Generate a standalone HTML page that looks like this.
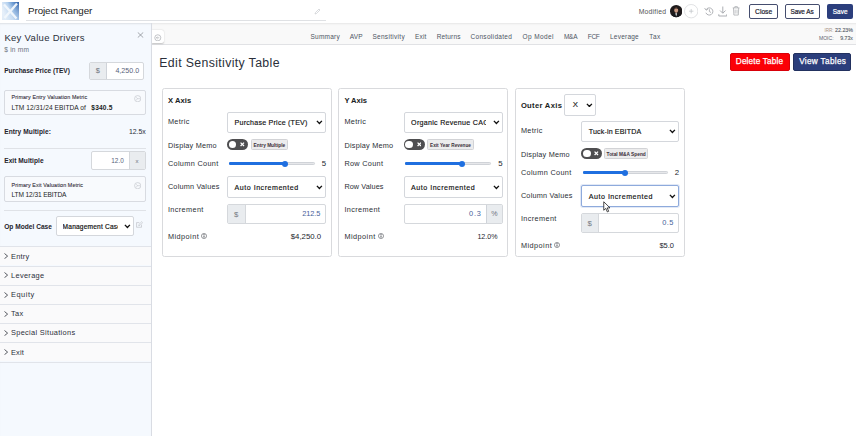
<!DOCTYPE html>
<html><head><meta charset='utf-8'><title>Edit Sensitivity Table</title>
<style>
html,body{margin:0;padding:0;background:#fff;}
body{width:856px;height:436px;overflow:hidden;position:relative;font-family:"Liberation Sans",sans-serif;}
#r{position:absolute;left:0;top:0;width:856px;height:436px;overflow:hidden;}
#r div,#r svg,#r span{position:absolute;box-sizing:border-box;}
#r span{white-space:pre;line-height:1;}
</style></head>
<body><div id='r'>
<header>
<div style='left:0.00px;top:0.00px;width:856.00px;height:23.40px;background:#fff;'></div>
<svg style='left:2px;top:2px' width='17' height='18' viewBox='0 0 34 36'>
<defs><linearGradient id='lg' x1='0' y1='.35' x2='1' y2='0'><stop offset='0' stop-color='#e4eef9'/><stop offset='.38' stop-color='#b4d0ee'/><stop offset='.62' stop-color='#6f9fd6'/><stop offset='1' stop-color='#2c5da6'/></linearGradient>
<linearGradient id='lg2' x1='0' y1='0' x2='0' y2='1'><stop offset='0' stop-color='#fff' stop-opacity='0'/><stop offset='1' stop-color='#dbe9f7' stop-opacity='.55'/></linearGradient></defs>
<rect width='34' height='36' fill='url(#lg)'/><rect width='34' height='36' fill='url(#lg2)'/>
<path d='M4 5 L29 33 M30 3 L5 32' stroke='#f3f8fd' stroke-width='4.6' opacity='.95'/>
</svg>
<span style='left:28.00px;top:6px;font-size:9.8px;font-weight:400;color:#222;letter-spacing:-0.082px'>Project Ranger</span>
<div style='left:26.00px;top:20.00px;width:300.00px;height:0.80px;background:#dfe1e4;'></div>
<svg style='left:313.5px;top:7.5px' width='7' height='7' viewBox='0 0 14 14'><path d='M2 12 L3 9 L10 2 L12 4 L5 11 Z' fill='none' stroke='#c9ccd0' stroke-width='1.4'/></svg>
<span style='left:638.70px;top:9px;font-size:6.8px;font-weight:400;color:#555;letter-spacing:0.228px'>Modified</span>
<svg style='left:669.8px;top:5.2px' width='12.4' height='12.4' viewBox='0 0 24 24'><defs><clipPath id='av'><circle cx='12' cy='12' r='12'/></clipPath></defs><g clip-path='url(#av)'><rect width='24' height='24' fill='#1f1b1c'/><ellipse cx='12' cy='10.2' rx='3.7' ry='5.4' fill='#c99a82'/><path d='M8.2 8.6 C8 3.6 16 3.6 15.8 8.6 C14.5 6.2 9.5 6.2 8.2 8.6Z' fill='#2a1c17'/><path d='M1 24 C2.5 17.5 8 16.6 12 16.6 C16 16.6 21.5 17.5 23 24 Z' fill='#17181c'/><path d='M10.2 16.2 L12 22.5 L13.8 16.2 Z' fill='#f0f2f5'/></g></svg>
<svg style='left:683.8px;top:4.2px' width='14.4' height='14.4' viewBox='0 0 28.8 28.8'><circle cx='14.4' cy='14.4' r='13.4' fill='#fff' stroke='#d0d2d5' stroke-width='1.3'/><path d='M14.4 10 V18.8 M10 14.4 H18.8' stroke='#c0c2c6' stroke-width='1.5'/></svg>
<svg style='left:703.5px;top:6.2px' width='10.5' height='10.5' viewBox='0 0 21 21'><path d='M4.2 7.5 A7.2 7.2 0 1 1 3.8 13.5' fill='none' stroke='#a3a5aa' stroke-width='1.7'/><path d='M1.2 4.2 L4.4 8.4 L8.4 5.6' fill='none' stroke='#a3a5aa' stroke-width='1.7'/><path d='M10.8 6.4 V11.2 L14 13' fill='none' stroke='#a3a5aa' stroke-width='1.6'/></svg>
<svg style='left:717.6px;top:5.8px' width='9.6' height='11' viewBox='0 0 19 22'><path d='M9.5 1 V14 M4 9 L9.5 14.5 L15 9' fill='none' stroke='#a3a5aa' stroke-width='1.8'/><path d='M1.5 16.5 V20 H17.5 V16.5' fill='none' stroke='#a3a5aa' stroke-width='1.8'/></svg>
<svg style='left:732.4px;top:5.9px' width='8.2' height='9.7' viewBox='0 0 18 23'><path d='M1 4.5 H17 M6 4.5 V1.5 H12 V4.5' fill='none' stroke='#a3a5aa' stroke-width='1.7'/><path d='M2.8 4.5 L3.8 21.5 H14.2 L15.2 4.5' fill='none' stroke='#a3a5aa' stroke-width='1.7'/><path d='M6.8 8.5 V18 M11.2 8.5 V18' stroke='#a3a5aa' stroke-width='1.5'/></svg>
<div style='left:749.30px;top:4.30px;width:28.40px;height:14.40px;background:#fff;border:0.8px solid #454d6e;border-radius:2px;'></div>
<span style='left:755.10px;top:9px;font-size:6.7px;font-weight:400;color:#1f2533;letter-spacing:-0.008px;-webkit-text-stroke:0.22px #1f2533'>Close</span>
<div style='left:784.60px;top:4.30px;width:35.00px;height:14.40px;background:#fff;border:0.8px solid #454d6e;border-radius:2px;'></div>
<span style='left:790.40px;top:9px;font-size:6.4px;font-weight:400;color:#1f2533;letter-spacing:-0.014px;-webkit-text-stroke:0.22px #1f2533'>Save As</span>
<div style='left:826.80px;top:4.30px;width:26.50px;height:14.40px;background:#2b3e7c;border-radius:2px;'></div>
<span style='left:832.80px;top:9px;font-size:6.4px;font-weight:400;color:#fff;letter-spacing:0.037px;-webkit-text-stroke:0.22px #fff'>Save</span>
</header>
<nav>
<div style='left:152.00px;top:23.00px;width:704.00px;height:21.80px;background:#f9f9f9;border-bottom:0.8px solid #e1e2e5;box-shadow:inset 0 2px 2px -1px rgba(0,0,0,.08);'></div>
<span style='left:310.50px;top:34px;font-size:6.5px;font-weight:400;color:#4d5563;letter-spacing:0.232px'>Summary</span>
<span style='left:349.80px;top:34px;font-size:6.5px;font-weight:400;color:#4d5563;letter-spacing:0.138px'>AVP</span>
<span style='left:372.40px;top:34px;font-size:6.5px;font-weight:400;color:#4d5563;letter-spacing:0.304px'>Sensitivity</span>
<span style='left:415.00px;top:34px;font-size:6.5px;font-weight:400;color:#4d5563;letter-spacing:0.188px'>Exit</span>
<span style='left:436.70px;top:34px;font-size:6.5px;font-weight:400;color:#4d5563;letter-spacing:0.173px'>Returns</span>
<span style='left:470.50px;top:34px;font-size:6.5px;font-weight:400;color:#4d5563;letter-spacing:0.314px'>Consolidated</span>
<span style='left:522.60px;top:34px;font-size:6.5px;font-weight:400;color:#4d5563;letter-spacing:0.388px'>Op Model</span>
<span style='left:564.00px;top:34px;font-size:6.5px;font-weight:400;color:#4d5563;letter-spacing:-0.293px'>M&amp;A</span>
<span style='left:587.80px;top:34px;font-size:6.5px;font-weight:400;color:#4d5563;letter-spacing:-0.368px'>FCF</span>
<span style='left:610.00px;top:34px;font-size:6.5px;font-weight:400;color:#4d5563;letter-spacing:0.228px'>Leverage</span>
<span style='left:649.30px;top:34px;font-size:6.5px;font-weight:400;color:#4d5563;letter-spacing:0.442px'>Tax</span>
<span style='left:824.40px;top:29px;font-size:4.5px;font-weight:400;color:#a8937f;letter-spacing:0.000px'>IRR:</span>
<span style='left:835.00px;top:28px;font-size:5.3px;font-weight:400;color:#555b66;letter-spacing:0.005px;-webkit-text-stroke:0.1px #555b66'>22.23%</span>
<span style='left:818.90px;top:36px;font-size:5.1px;font-weight:400;color:#5f646d;letter-spacing:-0.008px'>MOIC:</span>
<span style='left:840.30px;top:36px;font-size:5.2px;font-weight:400;color:#555b66;letter-spacing:-0.005px;-webkit-text-stroke:0.1px #555b66'>9.73x</span>
<div style='left:152.00px;top:30.00px;width:12.00px;height:13.40px;background:#fff;border-radius:0 2.5px 2.5px 0;box-shadow:0 0.5px 1.5px rgba(0,0,0,.22);'></div>
<svg style='left:154.2px;top:33.5px' width='7.6' height='7.6' viewBox='0 0 16 16'><circle cx='8' cy='8' r='6.4' fill='none' stroke='#a4a7ad' stroke-width='1.4'/><path d='M11.2 8 H5.4 M7.6 5.4 L5 8 L7.6 10.6' fill='none' stroke='#a4a7ad' stroke-width='1.4'/></svg>
</nav>
<aside>
<div style='left:0.00px;top:23.00px;width:151.00px;height:413.00px;background:#f5f9fe;box-shadow:inset 0 2px 2px -1px rgba(0,0,0,.10);'></div>
<span style='left:4.40px;top:33px;font-size:9.5px;font-weight:400;color:#2a2f3a;letter-spacing:0.305px'>Key Value Drivers</span>
<svg style='left:136.8px;top:32.4px' width='7' height='6' viewBox='0 0 14 12'><path d='M1.5 0.8 L12.5 11.2 M12.5 0.8 L1.5 11.2' stroke='#777b82' stroke-width='1.3'/></svg>
<span style='left:4.20px;top:47px;font-size:6.6px;font-weight:400;color:#6c727c;letter-spacing:0.221px'>$ in mm</span>
<span style='left:4.20px;top:68px;font-size:6.6px;font-weight:700;color:#1f232b;letter-spacing:-0.051px'>Purchase Price (TEV)</span>
<div style='left:89.20px;top:62.00px;width:54.60px;height:18.00px;background:#fff;border:0.8px solid #d5d8dc;border-radius:2px;overflow:hidden;'><div style='left:0.00px;top:0.00px;width:17.00px;height:17.20px;background:#e9ecef;border-right:0.8px solid #cfd3d9;'></div></div>
<span style='left:95.70px;top:67px;font-size:7.4px;font-weight:400;color:#6c727c;letter-spacing:0.000px'>$</span>
<span style='left:115.40px;top:68px;font-size:7.1px;font-weight:400;color:#56627a;letter-spacing:0.018px'>4,250.0</span>
<div style='left:4.10px;top:90.20px;width:141.70px;height:25.20px;background:#f8fafd;border:0.8px solid #d8dbe1;border-radius:2px;'></div>
<span style='left:11.50px;top:95px;font-size:5.3px;font-weight:400;color:#332e3a;letter-spacing:0.153px;-webkit-text-stroke:0.1px #332e3a'>Primary Entry Valuation Metric</span>
<span style='left:11.50px;top:105px;font-size:6.6px;font-weight:400;color:#1c1f25;letter-spacing:0.077px'>LTM 12/31/24 EBITDA of</span>
<span style='left:91.30px;top:105px;font-size:6.6px;font-weight:700;color:#1c1f25;letter-spacing:0.183px'>$340.5</span>
<svg style='left:133.70px;top:94.70px' width='7.4' height='7.4' viewBox='0 0 14 14'><circle cx='7' cy='7' r='5.9' fill='none' stroke='#c0c3c9' stroke-width='1.2'/><path d='M4 4.6 L7.2 7 L4 9.6 M7.2 7 H12' fill='none' stroke='#c0c3c9' stroke-width='1.1'/></svg>
<span style='left:4.20px;top:129px;font-size:6.6px;font-weight:700;color:#1f232b;letter-spacing:0.062px'>Entry Multiple:</span>
<span style='left:129.00px;top:129px;font-size:6.9px;font-weight:400;color:#2a2f3a;letter-spacing:-0.020px'>12.5x</span>
<div style='left:4.10px;top:147.70px;width:141.50px;height:0.80px;background:#dfe2e7;'></div>
<span style='left:4.20px;top:158px;font-size:6.6px;font-weight:700;color:#1f232b;letter-spacing:0.044px'>Exit Multiple</span>
<div style='left:90.50px;top:151.00px;width:55.30px;height:19.00px;background:#fff;border:0.8px solid #d5d8dc;border-radius:2px;overflow:hidden;'><div style='left:37.60px;top:0.00px;width:18.40px;height:19.00px;background:#e9ecef;border-left:0.8px solid #d5d8dc;'></div></div>
<span style='left:111.30px;top:158px;font-size:6.4px;font-weight:400;color:#56627a;letter-spacing:0.014px'>12.0</span>
<span style='left:135.60px;top:158px;font-size:6.0px;font-weight:400;color:#6c727c;letter-spacing:0.000px'>x</span>
<div style='left:4.10px;top:176.20px;width:141.70px;height:26.20px;background:#f8fafd;border:0.8px solid #d8dbe1;border-radius:2px;'></div>
<span style='left:11.50px;top:183px;font-size:5.3px;font-weight:400;color:#332e3a;letter-spacing:0.138px;-webkit-text-stroke:0.1px #332e3a'>Primary Exit Valuation Metric</span>
<span style='left:11.50px;top:192px;font-size:6.6px;font-weight:400;color:#1c1f25;letter-spacing:-0.115px'>LTM 12/31 EBITDA</span>
<svg style='left:133.70px;top:181.70px' width='7.4' height='7.4' viewBox='0 0 14 14'><circle cx='7' cy='7' r='5.9' fill='none' stroke='#c0c3c9' stroke-width='1.2'/><path d='M4 4.6 L7.2 7 L4 9.6 M7.2 7 H12' fill='none' stroke='#c0c3c9' stroke-width='1.1'/></svg>
<div style='left:4.10px;top:210.00px;width:141.50px;height:0.80px;background:#dfe2e7;'></div>
<span style='left:4.20px;top:224px;font-size:6.6px;font-weight:700;color:#1f232b;letter-spacing:0.010px'>Op Model Case</span>
<div style='left:55.50px;top:216.00px;width:78.20px;height:19.80px;background:#fff;border:0.8px solid #d4d7dc;border-radius:2px;'></div>
<div style='left:62.60px;top:222px;width:55.80px;height:11.6px;overflow:hidden'><span style='left:0;top:2px;font-size:6.6px;font-weight:400;color:#111;letter-spacing:0.190px;-webkit-text-stroke:0.18px #111'>Management Case</span></div>
<svg style='left:123.90px;top:224.40px' width='6.8' height='4.6' viewBox='0 0 13.6 9.2'><path d='M1.8 1.8 L6.8 7 L11.8 1.8' fill='none' stroke='#111' stroke-width='2.7'/></svg>
<svg style='left:136.3px;top:220.8px' width='7.2' height='7' viewBox='0 0 15 14'><path d='M11.5 7.5 V12.8 H1.2 V3 H7' fill='none' stroke='#b9bcc2' stroke-width='1.3'/><path d='M5.5 9.5 L6.2 6.8 L12 1 L14 3 L8.2 8.8 Z' fill='none' stroke='#b9bcc2' stroke-width='1.2'/></svg>
<div style='left:0.00px;top:246.30px;width:151.00px;height:19.20px;background:#fafafb;border-top:0.8px solid #e1e4ea;'></div>
<svg style='left:4.1px;top:253.10px' width='4.2' height='6.2' viewBox='0 0 8.4 12.4'><path d='M1 1 L7.2 6.2 L1 11.4' fill='none' stroke='#2c3038' stroke-width='1.6'/></svg>
<span style='left:11.00px;top:253px;font-size:7.4px;font-weight:400;color:#2a2f3a;letter-spacing:0.257px'>Entry</span>
<div style='left:0.00px;top:265.50px;width:151.00px;height:19.20px;background:#fafafb;border-top:0.8px solid #e1e4ea;'></div>
<svg style='left:4.1px;top:272.30px' width='4.2' height='6.2' viewBox='0 0 8.4 12.4'><path d='M1 1 L7.2 6.2 L1 11.4' fill='none' stroke='#2c3038' stroke-width='1.6'/></svg>
<span style='left:11.00px;top:272px;font-size:7.4px;font-weight:400;color:#2a2f3a;letter-spacing:0.335px'>Leverage</span>
<div style='left:0.00px;top:284.70px;width:151.00px;height:19.20px;background:#fafafb;border-top:0.8px solid #e1e4ea;'></div>
<svg style='left:4.1px;top:291.50px' width='4.2' height='6.2' viewBox='0 0 8.4 12.4'><path d='M1 1 L7.2 6.2 L1 11.4' fill='none' stroke='#2c3038' stroke-width='1.6'/></svg>
<span style='left:11.00px;top:291px;font-size:7.4px;font-weight:400;color:#2a2f3a;letter-spacing:0.527px'>Equity</span>
<div style='left:0.00px;top:303.90px;width:151.00px;height:19.20px;background:#fafafb;border-top:0.8px solid #e1e4ea;'></div>
<svg style='left:4.1px;top:310.70px' width='4.2' height='6.2' viewBox='0 0 8.4 12.4'><path d='M1 1 L7.2 6.2 L1 11.4' fill='none' stroke='#2c3038' stroke-width='1.6'/></svg>
<span style='left:11.00px;top:310px;font-size:7.4px;font-weight:400;color:#2a2f3a;letter-spacing:0.342px'>Tax</span>
<div style='left:0.00px;top:323.10px;width:151.00px;height:19.20px;background:#fafafb;border-top:0.8px solid #e1e4ea;'></div>
<svg style='left:4.1px;top:329.90px' width='4.2' height='6.2' viewBox='0 0 8.4 12.4'><path d='M1 1 L7.2 6.2 L1 11.4' fill='none' stroke='#2c3038' stroke-width='1.6'/></svg>
<span style='left:11.00px;top:329px;font-size:7.4px;font-weight:400;color:#2a2f3a;letter-spacing:0.316px'>Special Situations</span>
<div style='left:0.00px;top:342.30px;width:151.00px;height:19.20px;background:#fafafb;border-top:0.8px solid #e1e4ea;'></div>
<svg style='left:4.1px;top:349.10px' width='4.2' height='6.2' viewBox='0 0 8.4 12.4'><path d='M1 1 L7.2 6.2 L1 11.4' fill='none' stroke='#2c3038' stroke-width='1.6'/></svg>
<span style='left:11.00px;top:349px;font-size:7.4px;font-weight:400;color:#2a2f3a;letter-spacing:0.155px'>Exit</span>
<div style='left:0.00px;top:361.50px;width:151.20px;height:0.80px;background:#e1e4ea;'></div>
<div style='left:151.00px;top:23.00px;width:1.00px;height:413.00px;background:#d9dce3;'></div>
</aside>
<main>
<span style='left:159.30px;top:57px;font-size:12.3px;font-weight:400;color:#2a2f3a;letter-spacing:0.363px'>Edit Sensitivity Table</span>
<div style='left:729.50px;top:53.20px;width:60.10px;height:17.60px;background:#fb0006;border:0.8px solid #d8000a;border-radius:2px;'></div>
<span style='left:735.80px;top:58px;font-size:8.2px;font-weight:400;color:#fff;letter-spacing:0.178px;-webkit-text-stroke:0.25px #fff'>Delete Table</span>
<div style='left:793.00px;top:53.20px;width:58.00px;height:17.60px;background:#2b3e7c;border:0.8px solid #22315f;border-radius:2px;'></div>
<span style='left:799.20px;top:58px;font-size:8.2px;font-weight:400;color:#fff;letter-spacing:0.334px;-webkit-text-stroke:0.25px #fff'>View Tables</span>
<section><div style='left:162.00px;top:88.00px;width:170.00px;height:169.00px;background:#fff;border:1px solid #d9dadd;border-radius:2.5px;'></div><span style='left:167.90px;top:97px;font-size:7.6px;font-weight:700;color:#1a1d23;letter-spacing:0.069px'>X Axis</span><span style='left:167.90px;top:118px;font-size:7.3px;font-weight:400;color:#2b2f36;letter-spacing:0.326px'>Metric</span><div style='left:227.10px;top:112.40px;width:98.80px;height:20.20px;background:#fff;border:0.8px solid #d4d7dc;border-radius:2px;'></div><span style='left:234.60px;top:120px;font-size:7.1px;font-weight:400;color:#111;letter-spacing:0.223px;-webkit-text-stroke:0.15px #111'>Purchase Price (TEV)</span><svg style='left:315.90px;top:120.30px' width='6.8' height='4.6' viewBox='0 0 13.6 9.2'><path d='M1.8 1.8 L6.8 7 L11.8 1.8' fill='none' stroke='#111' stroke-width='2.7'/></svg><span style='left:167.90px;top:142px;font-size:7.3px;font-weight:400;color:#2b2f36;letter-spacing:0.232px'>Display Memo</span><div style='left:227.20px;top:139.00px;width:21.10px;height:11.00px;background:#4e4e50;border-radius:5.50px;'><div style='left:1.7px;top:1.7px;width:7.60px;height:7.60px;border-radius:50%;background:#fff'></div><svg style='left:12.90px;top:3.20px' width='4.6' height='4.6' viewBox='0 0 8 8'><path d='M1 1 L7 7 M7 1 L1 7' stroke='#fff' stroke-width='2.2'/></svg></div><div style='left:251.10px;top:139.00px;width:36.60px;height:10.60px;background:#ececed;border:0.7px solid #d2d3d6;border-radius:1.5px;'></div><span style='left:253.60px;top:144px;font-size:4.8px;font-weight:700;color:#3a2f3a;letter-spacing:-0.010px'>Entry Multiple</span><span style='left:167.90px;top:160px;font-size:7.3px;font-weight:400;color:#2b2f36;letter-spacing:0.340px'>Column Count</span><div style='left:228.90px;top:162.20px;width:85.90px;height:2.60px;background:#e6e7ea;border:0.5px solid #d0d3d8;border-radius:1.3px;'></div><div style='left:228.90px;top:162.20px;width:56.40px;height:2.60px;background:#1f6fe0;border-radius:1.3px;'></div><div style='left:282.30px;top:160.50px;width:6.00px;height:6.00px;background:#1f6fe0;border-radius:50%;'></div><span style='left:321.80px;top:160px;font-size:7.8px;font-weight:400;color:#22262d;letter-spacing:0.000px'>5</span><span style='left:167.90px;top:183px;font-size:7.3px;font-weight:400;color:#2b2f36;letter-spacing:0.212px'>Column Values</span><div style='left:227.10px;top:176.20px;width:98.80px;height:21.40px;background:#fff;border:0.8px solid #d4d7dc;border-radius:2px;'></div><span style='left:234.60px;top:185px;font-size:7.1px;font-weight:400;color:#111;letter-spacing:0.504px;-webkit-text-stroke:0.15px #111'>Auto Incremented</span><svg style='left:315.90px;top:185.00px' width='6.8' height='4.6' viewBox='0 0 13.6 9.2'><path d='M1.8 1.8 L6.8 7 L11.8 1.8' fill='none' stroke='#111' stroke-width='2.7'/></svg><span style='left:167.90px;top:206px;font-size:7.3px;font-weight:400;color:#2b2f36;letter-spacing:0.380px'>Increment</span><div style='left:227.10px;top:204.30px;width:98.80px;height:19.30px;background:#fff;border:0.8px solid #d5d8dc;border-radius:2px;overflow:hidden;'><div style='left:0.00px;top:0.00px;width:17.60px;height:19.30px;background:#e9ecef;border-right:0.8px solid #d5d8dc;'></div></div><span style='left:234.00px;top:211px;font-size:7.8px;font-weight:400;color:#747981;letter-spacing:0.000px'>$</span><span style='left:302.20px;top:210px;font-size:7.4px;font-weight:400;color:#46629a;letter-spacing:-0.080px'>212.5</span><span style='left:167.90px;top:233px;font-size:7.3px;font-weight:400;color:#2b2f36;letter-spacing:0.458px'>Midpoint</span><svg style='left:201.30px;top:232.60px' width='6' height='6' viewBox='0 0 12 12'><circle cx='6' cy='6' r='5.1' fill='none' stroke='#33373e' stroke-width='1'/><path d='M6 5 V9.2' stroke='#33373e' stroke-width='1.7'/><circle cx='6' cy='3' r='1' fill='#33373e'/></svg><span style='left:290.80px;top:233px;font-size:7.8px;font-weight:400;color:#22262d;letter-spacing:-0.023px'>$4,250.0</span></section>
<section><div style='left:338.00px;top:88.00px;width:170.00px;height:169.00px;background:#fff;border:1px solid #d9dadd;border-radius:2.5px;'></div><span style='left:344.40px;top:97px;font-size:7.6px;font-weight:700;color:#1a1d23;letter-spacing:-0.023px'>Y Axis</span><span style='left:344.40px;top:118px;font-size:7.3px;font-weight:400;color:#2b2f36;letter-spacing:0.326px'>Metric</span><div style='left:403.60px;top:112.40px;width:99.50px;height:20.20px;background:#fff;border:0.8px solid #d4d7dc;border-radius:2px;'></div><div style='left:411.10px;top:118px;width:74.80px;height:12.1px;overflow:hidden'><span style='left:0;top:2px;font-size:7.1px;font-weight:400;color:#111;letter-spacing:0.280px;-webkit-text-stroke:0.15px #111'>Organic Revenue CAGR</span></div><svg style='left:493.10px;top:120.30px' width='6.8' height='4.6' viewBox='0 0 13.6 9.2'><path d='M1.8 1.8 L6.8 7 L11.8 1.8' fill='none' stroke='#111' stroke-width='2.7'/></svg><span style='left:344.40px;top:142px;font-size:7.3px;font-weight:400;color:#2b2f36;letter-spacing:0.232px'>Display Memo</span><div style='left:403.70px;top:139.00px;width:21.10px;height:11.00px;background:#4e4e50;border-radius:5.50px;'><div style='left:1.7px;top:1.7px;width:7.60px;height:7.60px;border-radius:50%;background:#fff'></div><svg style='left:12.90px;top:3.20px' width='4.6' height='4.6' viewBox='0 0 8 8'><path d='M1 1 L7 7 M7 1 L1 7' stroke='#fff' stroke-width='2.2'/></svg></div><div style='left:427.40px;top:139.00px;width:46.20px;height:10.60px;background:#ececed;border:0.7px solid #d2d3d6;border-radius:1.5px;'></div><span style='left:430.00px;top:144px;font-size:4.7px;font-weight:700;color:#3a2f3a;letter-spacing:0.021px'>Exit Year Revenue</span><span style='left:344.40px;top:160px;font-size:7.3px;font-weight:400;color:#2b2f36;letter-spacing:0.311px'>Row Count</span><div style='left:405.40px;top:162.20px;width:85.90px;height:2.60px;background:#e6e7ea;border:0.5px solid #d0d3d8;border-radius:1.3px;'></div><div style='left:405.40px;top:162.20px;width:56.40px;height:2.60px;background:#1f6fe0;border-radius:1.3px;'></div><div style='left:458.80px;top:160.50px;width:6.00px;height:6.00px;background:#1f6fe0;border-radius:50%;'></div><span style='left:498.30px;top:160px;font-size:7.8px;font-weight:400;color:#22262d;letter-spacing:0.000px'>5</span><span style='left:344.40px;top:183px;font-size:7.3px;font-weight:400;color:#2b2f36;letter-spacing:0.077px'>Row Values</span><div style='left:403.60px;top:176.20px;width:99.50px;height:21.40px;background:#fff;border:0.8px solid #d4d7dc;border-radius:2px;'></div><span style='left:411.10px;top:185px;font-size:7.1px;font-weight:400;color:#111;letter-spacing:0.504px;-webkit-text-stroke:0.15px #111'>Auto Incremented</span><svg style='left:493.10px;top:185.00px' width='6.8' height='4.6' viewBox='0 0 13.6 9.2'><path d='M1.8 1.8 L6.8 7 L11.8 1.8' fill='none' stroke='#111' stroke-width='2.7'/></svg><span style='left:344.40px;top:206px;font-size:7.3px;font-weight:400;color:#2b2f36;letter-spacing:0.380px'>Increment</span><div style='left:403.60px;top:204.30px;width:99.50px;height:19.30px;background:#fff;border:0.8px solid #d5d8dc;border-radius:2px;overflow:hidden;'><div style='left:81.90px;top:0.00px;width:17.60px;height:19.30px;background:#e9ecef;border-left:0.8px solid #cfd3d9;'></div></div><span style='left:491.30px;top:211px;font-size:7.1px;font-weight:400;color:#6c727c;letter-spacing:0.000px'>%</span><span style='left:469.00px;top:210px;font-size:7.4px;font-weight:400;color:#46629a;letter-spacing:0.806px'>0.3</span><span style='left:344.40px;top:233px;font-size:7.3px;font-weight:400;color:#2b2f36;letter-spacing:0.458px'>Midpoint</span><svg style='left:377.80px;top:232.60px' width='6' height='6' viewBox='0 0 12 12'><circle cx='6' cy='6' r='5.1' fill='none' stroke='#33373e' stroke-width='1'/><path d='M6 5 V9.2' stroke='#33373e' stroke-width='1.7'/><circle cx='6' cy='3' r='1' fill='#33373e'/></svg><span style='left:477.40px;top:234px;font-size:7.1px;font-weight:400;color:#22262d;letter-spacing:-0.008px'>12.0%</span></section>
<section><div style='left:515.00px;top:88.00px;width:170.00px;height:169.00px;background:#fff;border:1px solid #d9dadd;border-radius:2.5px;'></div><div style='left:564.20px;top:93.80px;width:31.60px;height:22.00px;background:#fff;border:0.8px solid #d4d7dc;border-radius:2px;'></div><span style='left:572.80px;top:101px;font-size:7.8px;font-weight:400;color:#16181c;letter-spacing:0.000px;-webkit-text-stroke:0.15px #16181c'>X</span><svg style='left:586.30px;top:102.90px' width='6.8' height='4.6' viewBox='0 0 13.6 9.2'><path d='M1.8 1.8 L6.8 7 L11.8 1.8' fill='none' stroke='#111' stroke-width='2.7'/></svg><span style='left:520.90px;top:102px;font-size:7.6px;font-weight:700;color:#1a1d23;letter-spacing:0.316px'>Outer Axis</span><span style='left:520.90px;top:127px;font-size:7.3px;font-weight:400;color:#2b2f36;letter-spacing:0.326px'>Metric</span><div style='left:581.30px;top:121.40px;width:97.60px;height:20.20px;background:#fff;border:0.8px solid #d4d7dc;border-radius:2px;'></div><span style='left:588.80px;top:129px;font-size:7.1px;font-weight:400;color:#111;letter-spacing:0.136px;-webkit-text-stroke:0.15px #111'>Tuck-in EBITDA</span><svg style='left:668.90px;top:129.30px' width='6.8' height='4.6' viewBox='0 0 13.6 9.2'><path d='M1.8 1.8 L6.8 7 L11.8 1.8' fill='none' stroke='#111' stroke-width='2.7'/></svg><span style='left:520.90px;top:151px;font-size:7.3px;font-weight:400;color:#2b2f36;letter-spacing:0.232px'>Display Memo</span><div style='left:581.40px;top:148.00px;width:21.10px;height:11.00px;background:#4e4e50;border-radius:5.50px;'><div style='left:1.7px;top:1.7px;width:7.60px;height:7.60px;border-radius:50%;background:#fff'></div><svg style='left:12.90px;top:3.20px' width='4.6' height='4.6' viewBox='0 0 8 8'><path d='M1 1 L7 7 M7 1 L1 7' stroke='#fff' stroke-width='2.2'/></svg></div><div style='left:604.10px;top:148.00px;width:44.20px;height:10.60px;background:#ececed;border:0.7px solid #d2d3d6;border-radius:1.5px;'></div><span style='left:606.60px;top:153px;font-size:4.8px;font-weight:700;color:#3a2f3a;letter-spacing:0.000px'>Total M&amp;A Spend</span><span style='left:520.90px;top:169px;font-size:7.3px;font-weight:400;color:#2b2f36;letter-spacing:0.340px'>Column Count</span><div style='left:583.10px;top:171.20px;width:84.70px;height:2.60px;background:#e6e7ea;border:0.5px solid #d0d3d8;border-radius:1.3px;'></div><div style='left:583.10px;top:171.20px;width:42.10px;height:2.60px;background:#1f6fe0;border-radius:1.3px;'></div><div style='left:622.20px;top:169.50px;width:6.00px;height:6.00px;background:#1f6fe0;border-radius:50%;'></div><span style='left:674.80px;top:169px;font-size:7.8px;font-weight:400;color:#22262d;letter-spacing:0.000px'>2</span><span style='left:520.90px;top:192px;font-size:7.3px;font-weight:400;color:#2b2f36;letter-spacing:0.212px'>Column Values</span><div style='left:581.30px;top:185.20px;width:97.60px;height:21.40px;background:#fff;border:0.8px solid #8eaadc;border-radius:2px;box-shadow:0 0 0 1px rgba(76,120,200,.16);'></div><span style='left:588.80px;top:194px;font-size:7.1px;font-weight:400;color:#111;letter-spacing:0.504px;-webkit-text-stroke:0.15px #111'>Auto Incremented</span><svg style='left:668.90px;top:194.00px' width='6.8' height='4.6' viewBox='0 0 13.6 9.2'><path d='M1.8 1.8 L6.8 7 L11.8 1.8' fill='none' stroke='#111' stroke-width='2.7'/></svg><span style='left:520.90px;top:215px;font-size:7.3px;font-weight:400;color:#2b2f36;letter-spacing:0.380px'>Increment</span><div style='left:581.30px;top:213.30px;width:97.60px;height:19.30px;background:#fff;border:0.8px solid #d5d8dc;border-radius:2px;overflow:hidden;'><div style='left:0.00px;top:0.00px;width:16.30px;height:19.30px;background:#e9ecef;border-right:0.8px solid #d5d8dc;'></div></div><span style='left:587.55px;top:220px;font-size:7.8px;font-weight:400;color:#747981;letter-spacing:0.000px'>$</span><span style='left:662.30px;top:219px;font-size:7.4px;font-weight:400;color:#46629a;letter-spacing:0.406px'>0.5</span><span style='left:520.90px;top:242px;font-size:7.3px;font-weight:400;color:#2b2f36;letter-spacing:0.458px'>Midpoint</span><svg style='left:554.30px;top:241.60px' width='6' height='6' viewBox='0 0 12 12'><circle cx='6' cy='6' r='5.1' fill='none' stroke='#33373e' stroke-width='1'/><path d='M6 5 V9.2' stroke='#33373e' stroke-width='1.7'/><circle cx='6' cy='3' r='1' fill='#33373e'/></svg><span style='left:659.40px;top:242px;font-size:7.5px;font-weight:400;color:#22262d;letter-spacing:0.001px'>$5.0</span></section>
<svg style='left:602.6px;top:200.6px' width='8' height='12' viewBox='0 0 16 24'><path d='M1.5 1.5 V18.5 L5.6 14.8 L8.6 21.8 L11.4 20.6 L8.4 13.8 H14 Z' fill='#fff' stroke='#111' stroke-width='1.5' stroke-linejoin='round'/></svg>
</main>
</div></body></html>
